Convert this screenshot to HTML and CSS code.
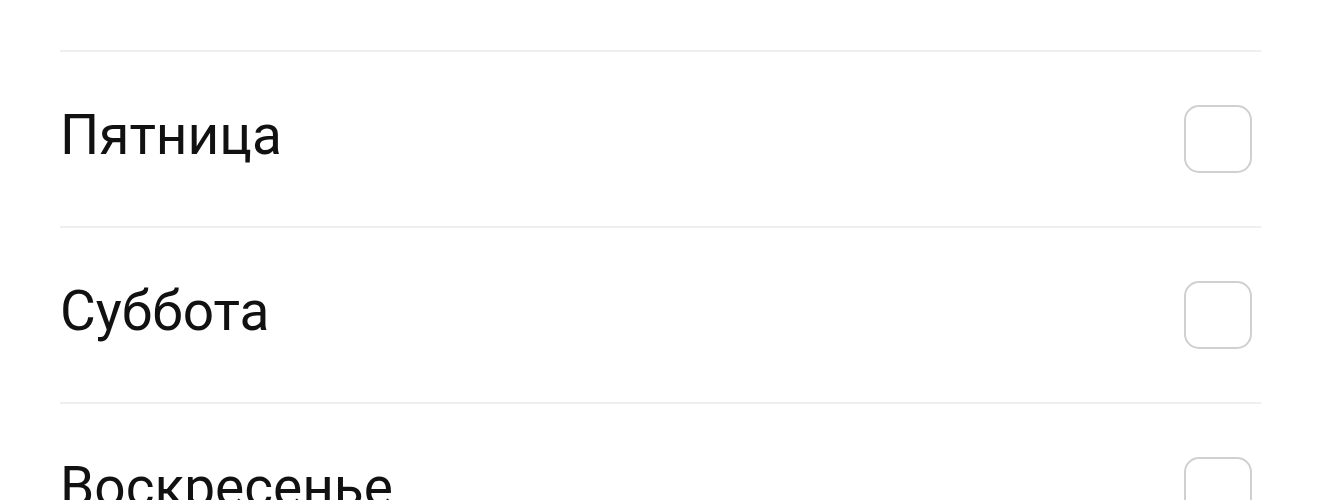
FILE: index.html
```html
<!DOCTYPE html>
<html lang="ru">
<head>
  <meta charset="UTF-8">
  <meta name="viewport" content="width=device-width, initial-scale=1.0">
  <title>Дни недели</title>
  <link rel="stylesheet" href="styles.css">
</head>
<body>
  <ul class="day-list">
    <li class="day-row">
      <span class="day-name">Четверг</span>
      <span class="check-box"></span>
    </li>
    <li class="day-row">
      <span class="day-name">Пятница</span>
      <span class="check-box"></span>
    </li>
    <li class="day-row">
      <span class="day-name">Суббота</span>
      <span class="check-box"></span>
    </li>
    <li class="day-row">
      <span class="day-name">Воскресенье</span>
      <span class="check-box"></span>
    </li>
  </ul>
</body>
</html>
```

FILE: styles.css
```css
body {
  margin: 0;
  background: #ffffff;
  font-family: Roboto, 'Noto Sans', sans-serif;
  color: #111111;
  overflow: hidden;
}
.day-list {
  list-style: none;
  margin: -124px 59px 0 60px;
  padding: 0;
}
.day-row {
  display: flex;
  align-items: center;
  justify-content: space-between;
  height: 174px;
  padding-right: 9px;
  border-bottom: 2px solid #efefef;
}
.day-name {
  font-size: 55px;
  margin-top: -8px;
}
.check-box {
  width: 64px;
  height: 64px;
  border: 2.5px solid #d0d0d0;
  border-radius: 15px;
}
```
